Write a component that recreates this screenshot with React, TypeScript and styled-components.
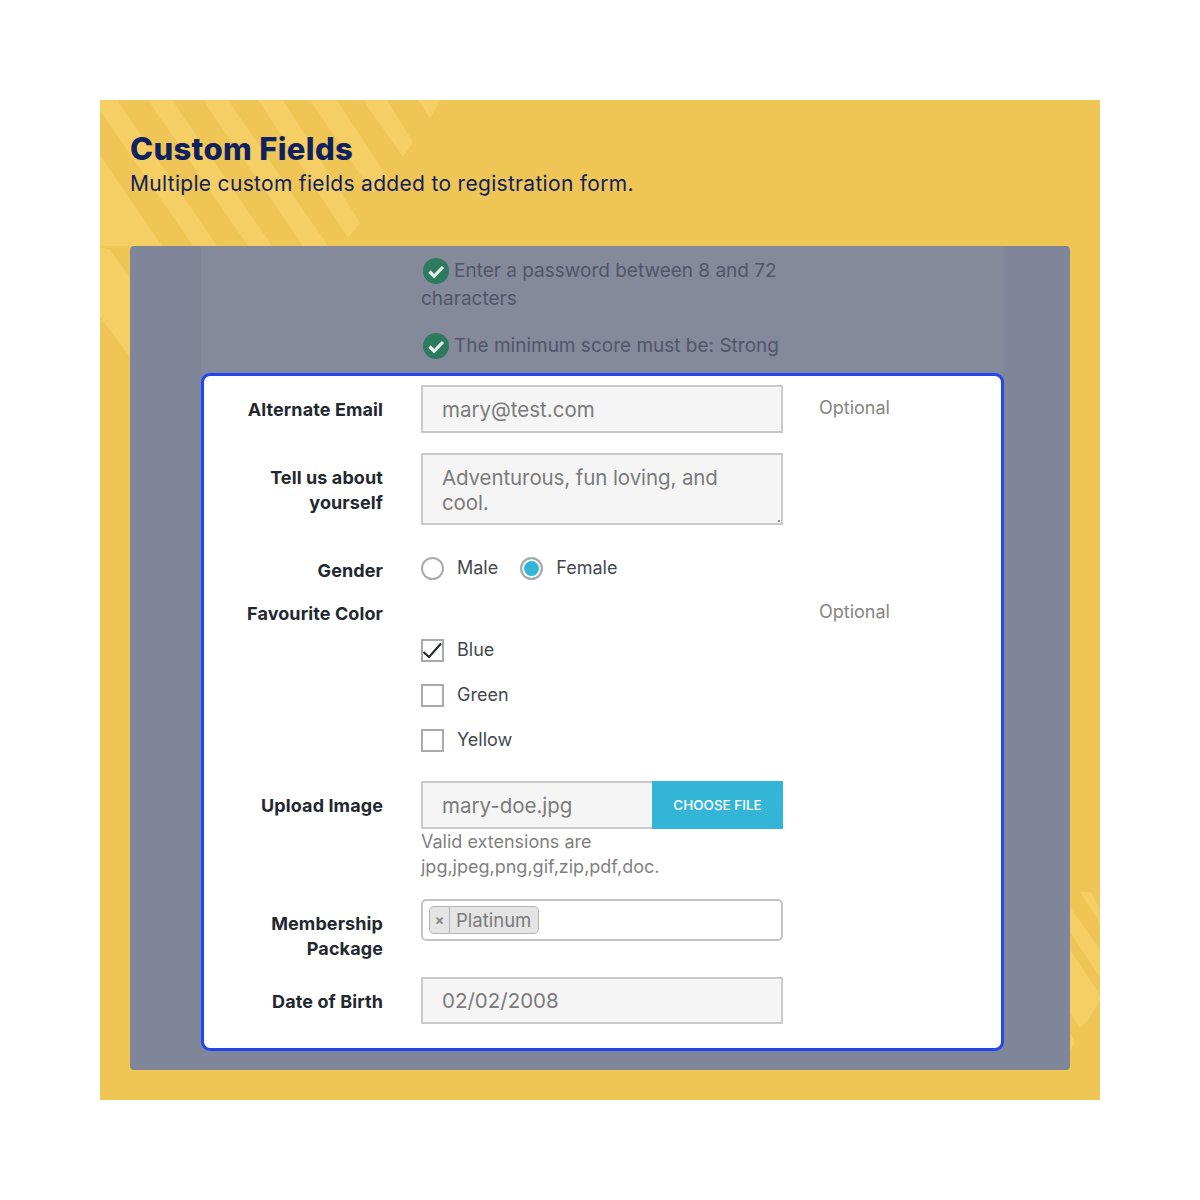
import * as React from 'react';
import styled, {createGlobalStyle} from 'styled-components';

const formFont = `Inter, "Noto Sans", sans-serif`;

const Global = createGlobalStyle`
  html, body { margin: 0; padding: 0; background: #fff; }
  * { box-sizing: border-box; }
`;

const Page = styled.div`
  width: 1200px;
  height: 1200px;
  padding: 100px;
`;

const Poster = styled.section`
  position: relative;
  width: 1000px;
  height: 1000px;
  background: #efc655;
  padding: 30px;
  overflow: hidden;
`;

const StripeArt = styled.svg`
  position: absolute;
  left: 0;
  top: 0;
`;

const Heading = styled.header`
  position: relative;
  height: 116px;
  color: #10215f;
  font-family: Inter, sans-serif;
`;

const Title = styled.h1`
  margin: 0;
  font-size: 31px;
  line-height: 38px;
  font-weight: 800;
  letter-spacing: 0.35px;
`;

const Subtitle = styled.p`
  margin: 0;
  font-size: 21px;
  line-height: 32px;
  font-weight: 400;
  letter-spacing: 0.31px;
`;

const Panel = styled.div`
  position: relative;
  width: 940px;
  height: 824px;
  background: #808699;
  border-radius: 4px;
  padding: 0 66px 0 71px;
  font-family: ${formFont};
`;

const Faded = styled.div`
  background: #84899c;
  height: 127px;
  padding: 11px 0 0 220px;
  color: #50556a;
  font-size: 19px;
  line-height: 28px;
`;

const Rule = styled.p`
  margin: 0 0 19px;
  width: 362px;
`;

const Tick = styled.svg`
  display: inline-block;
  width: 26px;
  height: 26px;
  margin: 0 5px 0 2px;
  vertical-align: -7px;
`;

const Card = styled.form`
  width: 803px;
  height: 678px;
  background: #fff;
  border: 3px solid #2346f0;
  border-radius: 9px;
  padding-top: 9px;
`;

const Row = styled.div<{$after: number}>`
  display: grid;
  grid-template-columns: 217px 362px 1fr;
  margin-bottom: ${p => p.$after}px;
`;

const Label = styled.label<{$pad?: number}>`
  padding-top: ${p => p.$pad ?? 12}px;
  padding-right: 38px;
  text-align: right;
  color: #23282f;
  font-size: 18px;
  line-height: 25px;
  font-weight: 700;
  letter-spacing: 0.1px;
`;

const Note = styled.span<{$pad?: number}>`
  color: #85857f;
  font-size: 18px;
  line-height: 25px;
  padding-top: ${p => p.$pad ?? 10}px;
  padding-left: 36px;
`;

const Field = styled.input`
  display: block;
  width: 100%;
  height: 48px;
  padding: 0 19px;
  background: #f5f5f5;
  border: 2px solid #c9c9c9;
  border-radius: 0;
  color: #7b7b7b;
  font: 400 20.5px ${formFont};
  outline: none;
`;

const AreaWrap = styled.div`
  position: relative;
  height: 72px;

  &::after {
    content: '';
    position: absolute;
    right: 3px;
    bottom: 3px;
    width: 2px;
    height: 2px;
    background: #8a8a8a;
  }
`;

const Area = styled.textarea`
  display: block;
  width: 100%;
  height: 72px;
  padding: 10px 19px;
  background: #f5f5f5;
  border: 2px solid #c9c9c9;
  border-radius: 0;
  color: #7b7b7b;
  font: 400 20.5px/25px ${formFont};
  letter-spacing: -0.1px;
  outline: none;
  resize: none;
`;

const Choices = styled.div`
  display: flex;
  align-items: center;
  height: 23px;
`;

const Choice = styled.div`
  display: flex;
  align-items: center;
  gap: 13px;
  margin-right: 22px;
  color: #44484d;
  font-size: 18px;
  line-height: 23px;
`;

const ChoiceText = styled.span`
  margin-top: -2px;
`;

const Radio = styled.span<{$on?: boolean}>`
  width: 23px;
  height: 23px;
  border: 2px solid #aaa;
  border-radius: 50%;
  background: ${p => (p.$on ? '#33b5d8' : '#fff')};
  box-shadow: ${p => (p.$on ? 'inset 0 0 0 2px #fff' : 'none')};
`;

const Checks = styled.div`
  display: flex;
  flex-direction: column;
  gap: 22px;
  padding-top: 40px;
`;

const Box = styled.span`
  display: block;
  width: 23px;
  height: 23px;
  border: 2px solid #aaa;
  background: #fff;
`;

const Upload = styled.div`
  display: flex;
  height: 48px;
`;

const UploadName = styled(Field)`
  flex: 1;
  width: auto;
  min-width: 0;
  border-right: none;
`;

const ChooseFile = styled.button`
  width: 131px;
  border: none;
  background: #33b5d8;
  color: #fff;
  font: 500 13.5px ${formFont};
  padding: 0;
`;

const Help = styled.div`
  color: #7f7f7f;
  font-size: 18px;
  line-height: 25px;
`;

const MultiSelect = styled.div`
  display: flex;
  align-items: center;
  height: 42px;
  padding: 0 6px;
  border: 2px solid #c4c4c4;
  border-radius: 5px;
`;

const Chip = styled.div`
  display: flex;
  align-items: stretch;
  height: 28px;
  width: 110px;
  background: #e4e4e4;
  border: 1px solid #b4b4b4;
  border-radius: 5px;
  color: #7b7b7b;
  font-size: 18.5px;
  line-height: 26px;
`;

const ChipRemove = styled.span`
  width: 20px;
  border-right: 1px solid #b4b4b4;
  text-align: center;
  font-size: 14px;
  font-weight: 700;
  color: #8a8a8a;
`;

const ChipText = styled.span`
  padding-left: 6px;
`;

const DateField = styled(Field)`
  height: 47px;
`;

// poster coordinates, the panel hides whatever runs under it
const stripes = [
  '318,0 341,0 330,18',
  '263,0 287,0 313,42 303,57',
  '210,0 237,0 288,78 273,93',
  '158,0 183,0 260,123 248,138',
  '103,0 128,0 228,146 203,146',
  '48,0 72,0 172,146 148,146',
  '-7,0 17,0 117,146 93,146',
  '-62,0 -38,0 62,146 38,146',
  '0,87 40,146 0,146',
  '10,150 30,177 30,257 0,217 0,146',
];

const stripesLow = [
  '980,792 991,792 1000,810 1000,823',
  '970,807 1000,850 1000,877 970,832',
  '970,850 1000,895 1000,900 988,920 980,928 970,913',
  '970,933 975,942 970,950',
];

const CheckMark = () => (
  <Tick viewBox="0 0 26 26">
    <circle cx="13" cy="13" r="13" fill="#2d7a5f" />
    <path d="M6.5 13.5l4.6 4.6L20 9" fill="none" stroke="#e6eee9" strokeWidth="3.2" />
  </Tick>
);

export default function App() {
  return (
    <Page>
      <Global />
      <Poster>
        <StripeArt width="1000" height="1000" viewBox="0 0 1000 1000">
          {[...stripes, ...stripesLow].map(s => (
            <polygon key={s} points={s} fill="#f6cf64" />
          ))}
        </StripeArt>
        <Heading>
          <Title>Custom Fields</Title>
          <Subtitle>Multiple custom fields added to registration form.</Subtitle>
        </Heading>
        <Panel>
          <Faded>
            <Rule>
              <CheckMark />
              Enter a password between 8 and 72 characters
            </Rule>
            <Rule>
              <CheckMark />
              The minimum score must be: Strong
            </Rule>
          </Faded>
          <Card>
            <Row $after={20}>
              <Label>Alternate Email</Label>
              <Field readOnly value="mary@test.com" />
              <Note>Optional</Note>
            </Row>
            <Row $after={32}>
              <Label>Tell us about yourself</Label>
              <AreaWrap>
                <Area readOnly value="Adventurous, fun loving, and cool." />
              </AreaWrap>
            </Row>
            <Row $after={16}>
              <Label $pad={1}>Gender</Label>
              <Choices>
                <Choice><Radio /><ChoiceText>Male</ChoiceText></Choice>
                <Choice><Radio $on /><ChoiceText>Female</ChoiceText></Choice>
              </Choices>
            </Row>
            <Row $after={29}>
              <Label $pad={2}>Favourite Color</Label>
              <Checks>
                <Choice>
                  <Box>
                    <svg width="19" height="19" viewBox="0 0 19 19">
                      <path d="M0.5 11l5.5 5L18 2.5" fill="none" stroke="#23282f" strokeWidth="2" />
                    </svg>
                  </Box>
                  <ChoiceText>Blue</ChoiceText>
                </Choice>
                <Choice><Box /><ChoiceText>Green</ChoiceText></Choice>
                <Choice><Box /><ChoiceText>Yellow</ChoiceText></Choice>
              </Checks>
              <Note $pad={0}>Optional</Note>
            </Row>
            <Row $after={20}>
              <Label>Upload Image</Label>
              <div>
                <Upload>
                  <UploadName readOnly value="mary-doe.jpg" />
                  <ChooseFile type="button">CHOOSE FILE</ChooseFile>
                </Upload>
                <Help>Valid extensions are jpg,jpeg,png,gif,zip,pdf,doc.</Help>
              </div>
            </Row>
            <Row $after={16}>
              <Label>Membership Package</Label>
              <MultiSelect>
                <Chip>
                  <ChipRemove>×</ChipRemove>
                  <ChipText>Platinum</ChipText>
                </Chip>
              </MultiSelect>
            </Row>
            <Row $after={0}>
              <Label>Date of Birth</Label>
              <DateField readOnly value="02/02/2008" />
            </Row>
          </Card>
        </Panel>
      </Poster>
    </Page>
  );
}
